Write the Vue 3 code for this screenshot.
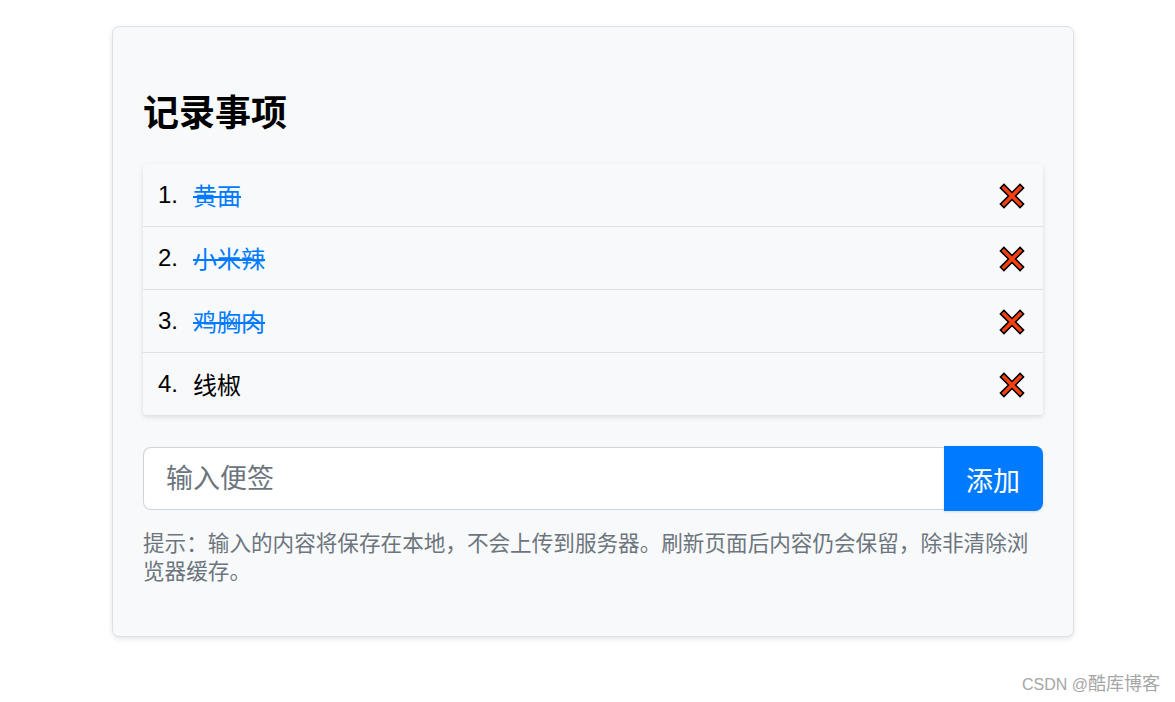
<script setup>
const items = [
  { id: 1, text: '黄面', done: true },
  { id: 2, text: '小米辣', done: true },
  { id: 3, text: '鸡胸肉', done: true },
  { id: 4, text: '线椒', done: false }
]
</script>

<template>
  <div class="page">
    <main class="card">
      <h1 class="title">记录事项</h1>
      <ul class="list">
        <li v-for="(item, i) in items" :key="item.id" class="row">
          <span class="num">{{ i + 1 }}.</span>
          <span class="label" :class="{ done: item.done }">{{ item.text }}</span>
          <button class="del" aria-label="删除">
            <svg viewBox="0 0 26 26" width="26" height="26">
              <path class="x" d="M4.9 1.4 13 9.5 21.1 1.4 24.6 4.9 16.5 13 24.6 21.1 21.1 24.6 13 16.5 4.9 24.6 1.4 21.1 9.5 13 1.4 4.9Z" />
            </svg>
          </button>
        </li>
      </ul>
      <form class="entry" @submit.prevent>
        <input class="input" type="text" placeholder="输入便签" />
        <button class="add" type="submit">添加</button>
      </form>
      <p class="hint">提示：输入的内容将保存在本地，不会上传到服务器。刷新页面后内容仍会保留，除非清除浏览器缓存。</p>
    </main>
    <div class="mark">CSDN @<span class="mark-cjk">酷库博客</span></div>
  </div>
</template>

<style scoped>
.page {
  position: relative;
  height: 702px;
  overflow: hidden;
  padding: 26px 0 0 112px;
  box-sizing: border-box;
  background: #fff;
  font-family: "Liberation Sans", "Noto Sans CJK SC", sans-serif;
}
.card {
  width: 962px;
  height: 611px;
  box-sizing: border-box;
  padding: 58px 30px 0;
  background: #f8f9fa;
  border: 1px solid #dee2e6;
  border-radius: 7px;
  box-shadow: 0 2px 5px rgba(0, 0, 0, 0.1);
}
.title {
  margin: 0 0 21px;
  font-size: 36px;
  line-height: 58px;
  font-weight: 700;
  color: #000;
}
.list {
  margin: 0;
  padding: 0;
  list-style: none;
  border-radius: 4px;
  box-shadow: 0 2px 5px rgba(0, 0, 0, 0.12);
}
.row {
  display: flex;
  align-items: center;
  height: 63px;
  box-sizing: border-box;
  padding: 0 18px 0 15px;
  border-bottom: 1px solid #dee2e6;
  font-size: 24px;
}
.row:last-child {
  height: 62px;
  border-bottom: 0;
}
.num {
  width: 35px;
  color: #000;
}
.label {
  flex: 1;
  padding-bottom: 2px;
  color: #000;
}
.label.done {
  color: #007bff;
  text-decoration: line-through;
}
.del {
  display: flex;
  width: 26px;
  height: 26px;
  margin-top: 2px;
  padding: 0;
  border: 0;
  background: none;
}
.x {
  fill: #f8400f;
  stroke: #000;
  stroke-width: 1.5;
  stroke-linejoin: miter;
}
.entry {
  display: flex;
  margin-top: 32px;
  height: 63px;
  width: 900px;
}
.input {
  flex: 1;
  min-width: 0;
  box-sizing: border-box;
  height: 63px;
  padding: 2px 22px 0;
  border: 1px solid #ced4da;
  border-right: 0;
  border-radius: 8px 0 0 8px;
  background: #fff;
  font: 27px "Liberation Sans", "Noto Sans CJK SC", sans-serif;
  outline: none;
}
.input::placeholder {
  color: #6c757d;
  opacity: 1;
}
.add {
  width: 99px;
  height: 65px;
  margin-top: -1px;
  border: 0;
  padding: 2px 1px 0 0;
  border-radius: 0 8px 8px 0;
  background: #007bff;
  color: #fff;
  font: 27px "Liberation Sans", "Noto Sans CJK SC", sans-serif;
  box-shadow: 0 1px 3px rgba(0, 0, 0, 0.12);
}
.hint {
  margin: 20px 0 0;
  width: 900px;
  font-size: 21.6px;
  line-height: 28px;
  color: #6c757d;
}
.mark {
  position: absolute;
  right: 15px;
  top: 673px;
  font-size: 16px;
  line-height: 22px;
  color: #a6a6a6;
}
.mark-cjk {
  font-size: 18px;
}
</style>
